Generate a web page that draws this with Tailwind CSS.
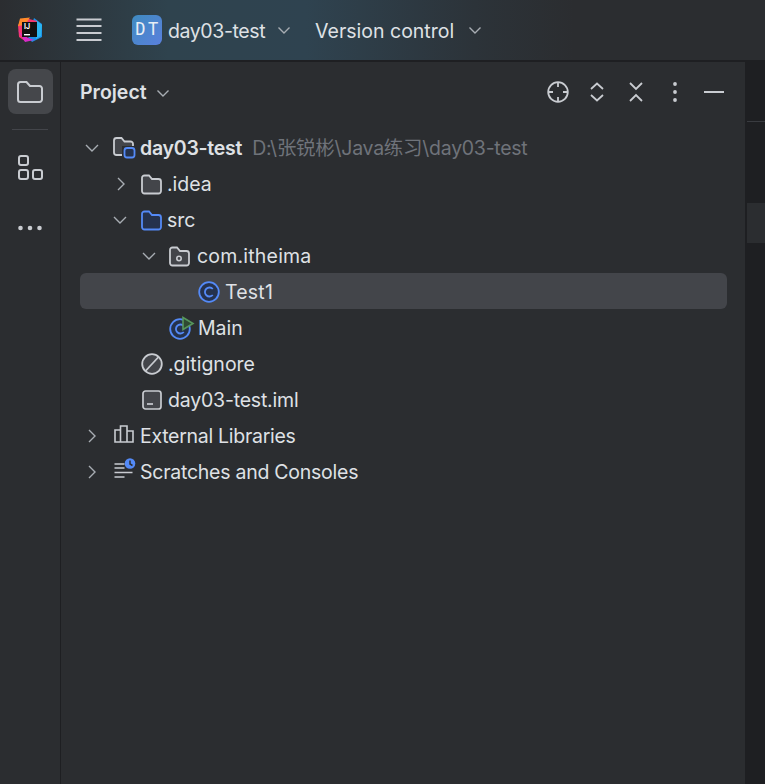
<!DOCTYPE html>
<html>
<head>
<meta charset="utf-8">
<script src="https://cdn.jsdelivr.net/npm/@tailwindcss/browser@4"></script>
</head>
<body class="m-0 bg-[#1e1f22]">
<div class="w-[765px] h-[784px] overflow-hidden flex flex-col font-['Inter','Noto_Sans_CJK_SC',sans-serif] text-[#dfe1e5] bg-[#1e1f22]">
  <!-- top bar -->
  <header class="h-[60px] shrink-0 flex items-center bg-[linear-gradient(90deg,#2b2d30_0%,#2f434e_22%,#2f4350_40%,#2c3339_62%,#2b2d30_75%)]">
    <svg class="ml-[17px] w-[26px] h-[26px]" viewBox="0 0 26 26">
      <path d="M17 1 L25 7 L25 20 L15 25 L11 20 Z" fill="#1c8fe8"/>
      <path d="M19 3 L25 8 L24 19 L19 22 Z" fill="#2bb6f0"/>
      <path d="M1 8 L8 1 L20 4 L8 24 L2 20 Z" fill="#f5366f"/>
      <path d="M3 1.500 L13 0.500 L8 8 L1 9 Z" fill="#ff8a2a"/>
      <path d="M1 13 L8 25 L17 23 L6 19 Z" fill="#d92bc9"/>
      <rect x="5" y="5" width="15" height="15" fill="#111"/>
      <text x="7" y="12" font-size="7" font-weight="700" fill="#fff" font-family="Inter">IJ</text>
      <rect x="7" y="17" width="6" height="1.400" fill="#fff"/>
    </svg>
    <svg class="ml-[33px] w-[26px] h-[26px]" viewBox="0 0 26 26" fill="none" stroke="#c9ccd1" stroke-width="2"><path d="M0.500 2.500h25M0.500 9h25M0.500 16h25M0.500 23h25"/></svg>
    <div class="ml-[30px] w-[30px] h-[30px] rounded-[6px] bg-[linear-gradient(135deg,#3f8bc0,#5a80dd)] flex items-center justify-center text-[17px] tracking-[2.500px] pl-[2px] font-['DejaVu_Sans_Mono',monospace] text-[#e8eef5]">DT</div>
    <span class="ml-[6px] text-[19.500px] leading-none pt-[3px] tracking-[-0.4px]">day03-test</span>
    <svg class="ml-[12px] w-[14px] h-[14px] -mt-[1px]" viewBox="0 0 14 14" fill="none" stroke="#a8adb3" stroke-width="1.400"><path d="M1.500 4.500 7 10l5.500-5.500"/></svg>
    <span class="ml-[24px] text-[19.500px] leading-none pt-[3px]">Version control</span>
    <svg class="ml-[14px] w-[14px] h-[14px] -mt-[1px]" viewBox="0 0 14 14" fill="none" stroke="#a8adb3" stroke-width="1.400"><path d="M1.500 4.500 7 10l5.500-5.500"/></svg>
  </header>
  <div class="h-[2px] shrink-0 bg-[#1e1f22]"></div>
  <div class="flex flex-1 min-h-0">
    <!-- left strip -->
    <aside class="w-[60px] shrink-0 bg-[#2b2d30] flex flex-col items-center pt-[7px]">
      <div class="w-[45px] h-[45px] rounded-[8px] bg-[#45474b] flex items-center justify-center">
        <svg class="w-[28px] h-[28px]" viewBox="0 0 28 28" fill="none" stroke="#c9ccd1" stroke-width="2"><path d="M2 6.500A2.500 2.500 0 0 1 4.500 4h6l3.500 4h9.500A2.500 2.500 0 0 1 26 10.500v11a2.500 2.500 0 0 1-2.500 2.500h-19A2.500 2.500 0 0 1 2 21.500z"/></svg>
      </div>
      <div class="w-[36px] h-px bg-[#43454a] mt-[15px]"></div>
      <svg class="mt-[25px] w-[26px] h-[26px]" viewBox="0 0 26 26" fill="none" stroke="#c9ccd1" stroke-width="2"><rect x="2" y="1" width="9" height="9" rx="2"/><rect x="2" y="15" width="9" height="9" rx="2"/><rect x="16" y="15" width="9" height="9" rx="2"/></svg>
      <svg class="mt-[44px] w-[26px] h-[6px]" viewBox="0 0 26 6" fill="#c9ccd1"><circle cx="3.500" cy="3" r="2.300"/><circle cx="13" cy="3" r="2.300"/><circle cx="22.500" cy="3" r="2.300"/></svg>
    </aside>
    <!-- project panel -->
    <main class="w-[685px] shrink-0 bg-[#2b2d30] border-l border-[#1e1f22]">
      <div class="h-[60px] flex items-center pl-[19px] pr-[20px]">
        <span class="text-[19.500px] font-semibold leading-none pt-[2px]">Project</span>
        <svg class="ml-[9px] w-[14px] h-[14px] mt-[1px]" viewBox="0 0 14 14" fill="none" stroke="#a8adb3" stroke-width="1.400"><path d="M1.500 4.500 7 10l5.500-5.500"/></svg>
        <div class="ml-auto flex items-center gap-[17px]">
          <svg class="w-[22px] h-[22px]" viewBox="0 0 22 22" fill="none" stroke="#c9ccd1" stroke-width="1.800"><circle cx="11" cy="11" r="9.800"/><path d="M11 1v5M11 16v5M1 11h5M16 11h5"/></svg>
          <svg class="w-[22px] h-[22px]" viewBox="0 0 22 22" fill="none" stroke="#c9ccd1" stroke-width="1.800"><path d="M5 8l6-5.500L17 8M5 14l6 5.500 6-5.500"/></svg>
          <svg class="w-[22px] h-[22px]" viewBox="0 0 22 22" fill="none" stroke="#c9ccd1" stroke-width="1.800"><path d="M5 2l6 6 6-6M5 20l6-6 6 6"/></svg>
          <svg class="w-[22px] h-[22px]" viewBox="0 0 22 22" fill="#c9ccd1"><circle cx="11" cy="3" r="1.900"/><circle cx="11" cy="11" r="1.900"/><circle cx="11" cy="19" r="1.900"/></svg>
          <svg class="w-[22px] h-[22px]" viewBox="0 0 22 22" fill="none" stroke="#c9ccd1" stroke-width="2"><path d="M1 11h20"/></svg>
        </div>
      </div>
      <div class="pt-[7px] pl-[19px] pr-[18px] text-[19.500px]">
        <div class="h-9 flex items-center pt-[2px] pl-[5px]">
          <svg class="w-[14px] h-[14px]" viewBox="0 0 14 14" fill="none" stroke="#a8adb3" stroke-width="1.400"><path d="M1 4 7 10l6-6"/></svg>
          <svg class="ml-[13px] w-[24px] h-[24px]" viewBox="0 0 24 24" fill="none"><path d="M2 4.500A2.500 2.500 0 0 1 4.500 2h5l3 3.500h6A2.500 2.500 0 0 1 21 8v8.500a2.500 2.500 0 0 1-2.500 2.500h-14A2.500 2.500 0 0 1 2 16.500z" fill="#43454a" stroke="#c9ccd1" stroke-width="1.800"/><rect x="10" y="10" width="14" height="14" fill="#2b2d30"/><rect x="12.500" y="12" width="10" height="9.500" rx="2.500" fill="#25324d" stroke="#548af7" stroke-width="1.800"/></svg>
          <span class="ml-[4px] font-semibold pt-[2px] tracking-[-0.25px]">day03-test</span>
          <span class="ml-[10px] text-[#6f737a] pt-[2px] tracking-[-0.27px]">D:\张锐彬\Java练习\day03-test</span>
        </div>
        <div class="h-9 flex items-center pt-[2px] pl-[34px]">
          <svg class="w-[14px] h-[14px]" viewBox="0 0 14 14" fill="none" stroke="#a8adb3" stroke-width="1.400"><path d="M4 1l6 6-6 6"/></svg>
          <svg class="ml-[11px] w-[24px] h-[24px]" viewBox="0 0 24 24" fill="#43454a" stroke="#c9ccd1" stroke-width="1.800"><path d="M3 6A2.500 2.500 0 0 1 5.500 3.500h4.500l3 3.500h6.500A2.500 2.500 0 0 1 22 9.500V19a2.500 2.500 0 0 1-2.500 2.500h-14A2.500 2.500 0 0 1 3 19z"/></svg>
          <span class="ml-[4px] pt-[2px]">.idea</span>
        </div>
        <div class="h-9 flex items-center pt-[2px] pl-[33px]">
          <svg class="w-[14px] h-[14px]" viewBox="0 0 14 14" fill="none" stroke="#a8adb3" stroke-width="1.400"><path d="M1 4 7 10l6-6"/></svg>
          <svg class="ml-[12px] w-[24px] h-[24px]" viewBox="0 0 24 24" fill="#25324d" stroke="#548af7" stroke-width="1.800"><path d="M3 6A2.500 2.500 0 0 1 5.500 3.500h4.500l3 3.500h6.500A2.500 2.500 0 0 1 22 9.500V19a2.500 2.500 0 0 1-2.500 2.500h-14A2.500 2.500 0 0 1 3 19z"/></svg>
          <span class="ml-[4px] pt-[2px]">src</span>
        </div>
        <div class="h-9 flex items-center pt-[2px] pl-[62px]">
          <svg class="w-[14px] h-[14px]" viewBox="0 0 14 14" fill="none" stroke="#a8adb3" stroke-width="1.400"><path d="M1 4 7 10l6-6"/></svg>
          <svg class="ml-[11px] w-[24px] h-[24px]" viewBox="0 0 24 24" fill="#43454a" stroke="#c9ccd1" stroke-width="1.800"><path d="M3 6A2.500 2.500 0 0 1 5.500 3.500h4.500l3 3.500h6.500A2.500 2.500 0 0 1 22 9.500V19a2.500 2.500 0 0 1-2.500 2.500h-14A2.500 2.500 0 0 1 3 19z"/><circle cx="12" cy="14.500" r="2.200" fill="none" stroke-width="1.600"/></svg>
          <span class="ml-[6px] pt-[2px] tracking-[0.2px]">com.itheima</span>
        </div>
        <div class="h-9 flex items-center pt-[2px] pl-[118px] bg-[#43454a] rounded-[6px]">
          <svg class="w-[22px] h-[22px]" viewBox="0 0 22 22" fill="#25324d" stroke="#548af7" stroke-width="1.800"><circle cx="11" cy="11" r="9.800"/><path d="M14.800 8A4.500 4.500 0 1 0 14.800 14" fill="none"/></svg>
          <span class="ml-[5px] pt-[2px] tracking-[0.2px]">Test1</span>
        </div>
        <div class="h-9 flex items-center pt-[2px] pl-[89px]">
          <svg class="w-[26px] h-[24px]" viewBox="0 0 26 24"><g fill="#25324d" stroke="#548af7" stroke-width="1.800"><circle cx="11" cy="13" r="9.800"/><path d="M14.800 10A4.500 4.500 0 1 0 14.800 16" fill="none"/></g><path d="M14 1.500 24 7.500 14 13.500z" fill="#2f4a32" stroke="#57965c" stroke-width="1.600"/></svg>
          <span class="ml-[3px] pt-[2px]">Main</span>
        </div>
        <div class="h-9 flex items-center pt-[2px] pl-[61px]">
          <svg class="w-[22px] h-[22px]" viewBox="0 0 22 22" fill="#43454a" stroke="#c9ccd1" stroke-width="1.800"><circle cx="11" cy="11" r="9.800"/><path d="M4.500 18 17.500 4" fill="none"/></svg>
          <span class="ml-[5px] pt-[2px]">.gitignore</span>
        </div>
        <div class="h-9 flex items-center pt-[2px] pl-[62px]">
          <svg class="w-[20px] h-[20px]" viewBox="0 0 20 20" fill="#43454a" stroke="#c9ccd1" stroke-width="1.700"><rect x="1" y="1" width="18" height="18" rx="2.500"/><path d="M5 14h6" fill="none"/></svg>
          <span class="ml-[6px] pt-[2px] tracking-[-0.2px]">day03-test.iml</span>
        </div>
        <div class="h-9 flex items-center pt-[2px] pl-[5px]">
          <svg class="w-[14px] h-[14px]" viewBox="0 0 14 14" fill="none" stroke="#a8adb3" stroke-width="1.400"><path d="M4 1l6 6-6 6"/></svg>
          <svg class="ml-[15px] w-[20px] h-[24px]" viewBox="0 0 20 24" fill="none" stroke="#c9ccd1" stroke-width="1.600"><path d="M1 6h5.500v12H1zM6.500 2h6.500v16H6.500zM13 7h6v11h-6z"/></svg>
          <span class="ml-[6px] pt-[2px] tracking-[-0.28px]">External Libraries</span>
        </div>
        <div class="h-9 flex items-center pt-[2px] pl-[5px]">
          <svg class="w-[14px] h-[14px]" viewBox="0 0 14 14" fill="none" stroke="#a8adb3" stroke-width="1.400"><path d="M4 1l6 6-6 6"/></svg>
          <svg class="ml-[15px] w-[22px] h-[28px]" viewBox="0 0 22 28" fill="none" stroke="#c9ccd1" stroke-width="1.500"><path d="M0.500 6h10M0.500 10h10M0.500 14.500h18M0.500 19h10"/><circle cx="16" cy="5.500" r="5.300" fill="#548af7" stroke="none"/><path d="M16 2.500v3.500l2.500 1.500" stroke="#2b2d30"/></svg>
          <span class="ml-[4px] pt-[2px] tracking-[-0.25px]">Scratches and Consoles</span>
        </div>
      </div>
    </main>
    <!-- right edge -->
    <div class="flex-1 flex flex-col pl-[2px]">
      <div class="h-[60px] border-b border-[#393b40]"></div>
      <div class="h-[81px]"></div>
      <div class="h-[40px] bg-[#2b2d30]"></div>
    </div>
  </div>
</div>
</body>
</html>
